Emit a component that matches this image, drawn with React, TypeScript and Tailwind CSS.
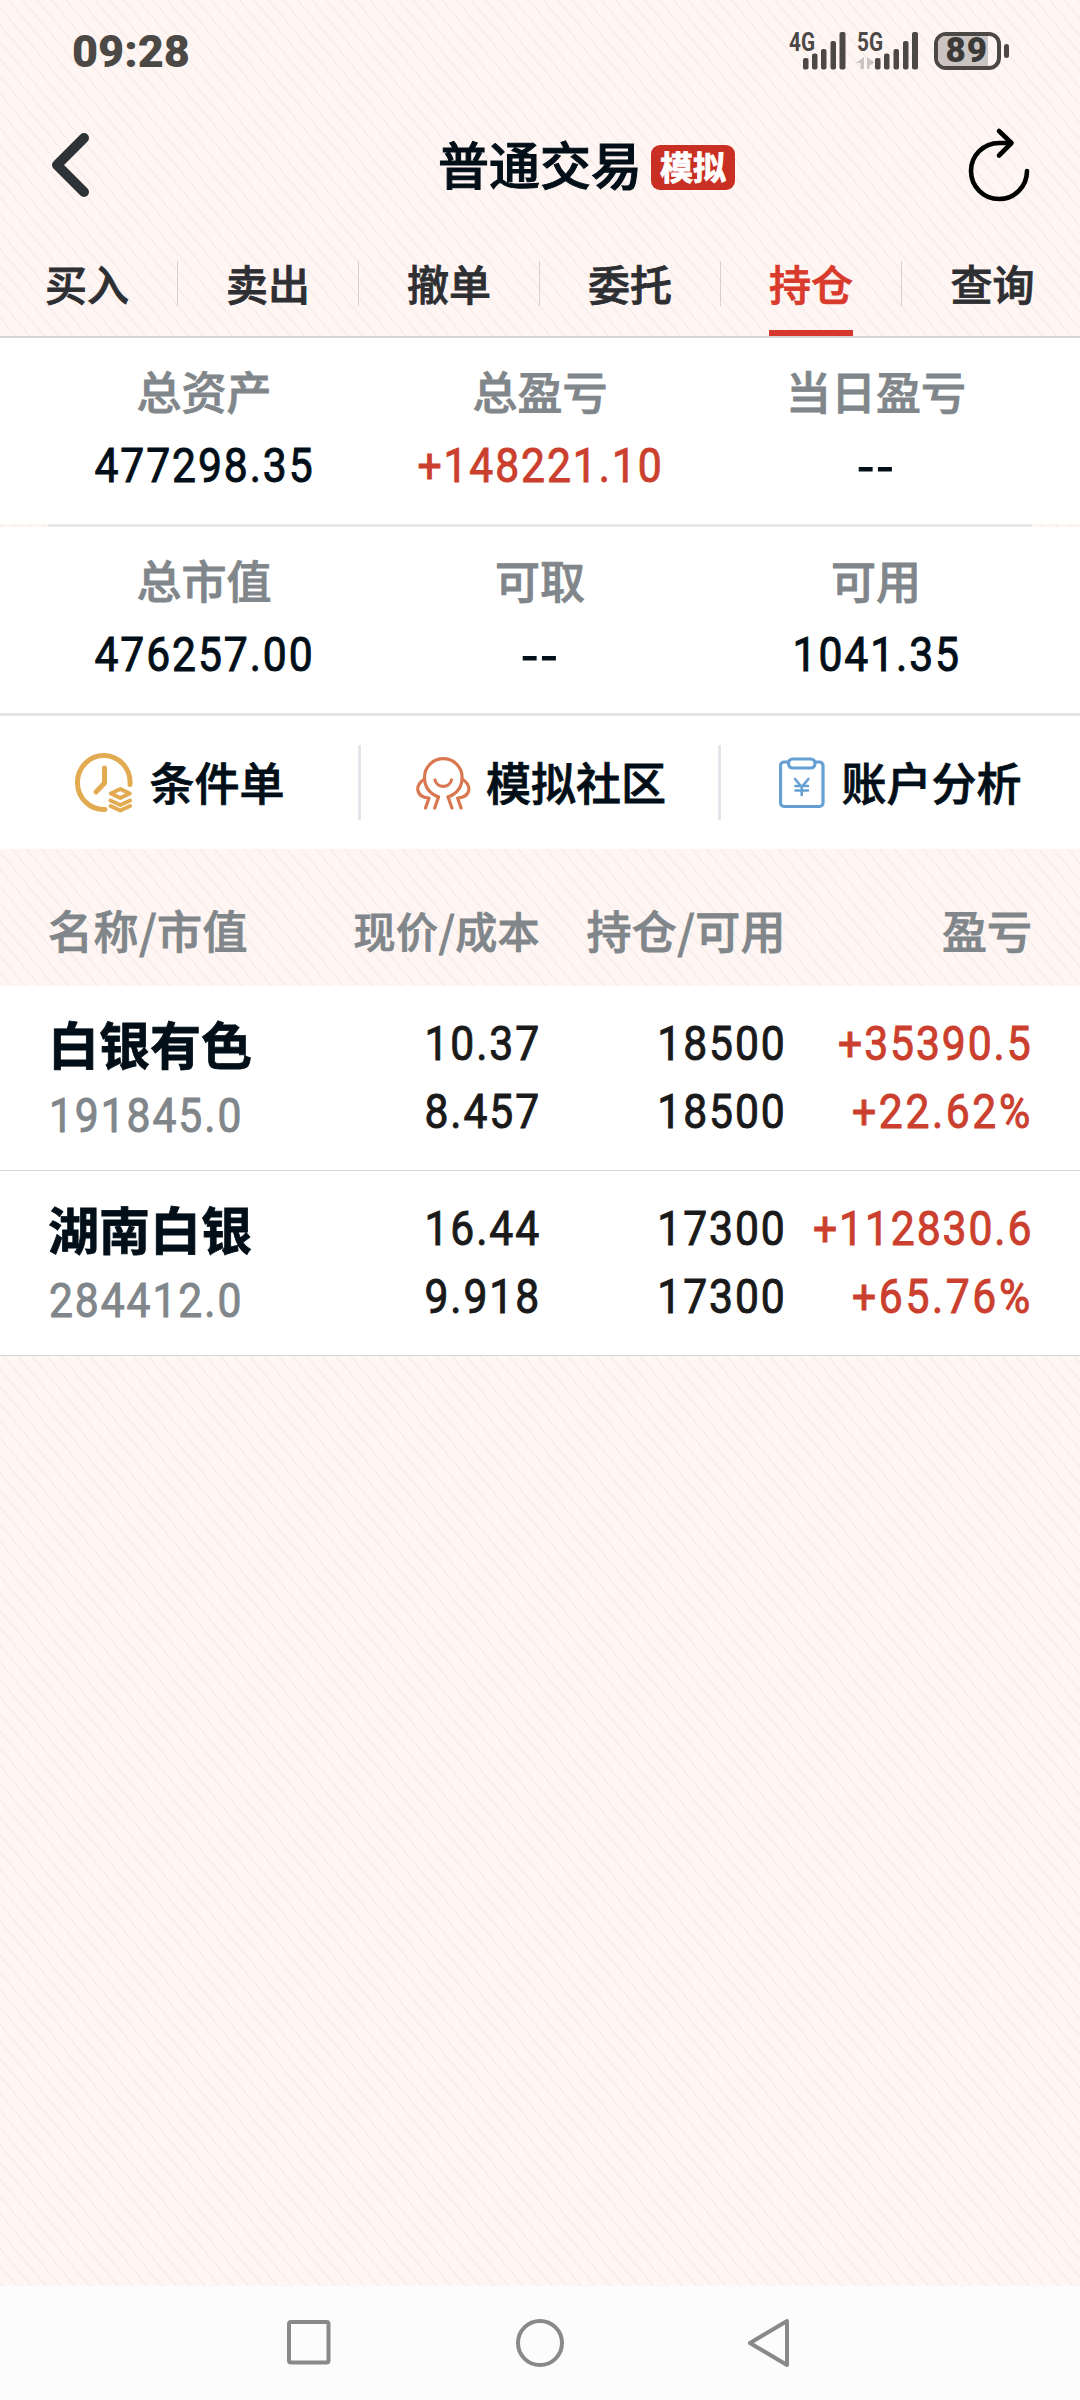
// Simulated trading: holdings screen

import type { ReactNode } from 'react';
import clsx from 'clsx';

interface Summary {
  label: string;
  value: string;
  up?:   boolean;
}

interface Holding {
  name:      string;
  value:     string;
  price:     string;
  cost:      string;
  amount:    string;
  available: string;
  profit:    string;
  rate:      string;
}

const TABS = ['买入', '卖出', '撤单', '委托', '持仓', '查询'];
const ACTIVE_TAB = '持仓';

const SUMMARY: Summary[][] = [
  [
    { label: '总资产',   value: '477298.35' },
    { label: '总盈亏',   value: '+148221.10', up: true },
    { label: '当日盈亏', value: '--' },
  ],
  [
    { label: '总市值', value: '476257.00' },
    { label: '可取',   value: '--' },
    { label: '可用',   value: '1041.35' },
  ],
];

const HOLDINGS: Holding[] = [
  {
    name: '白银有色', value: '191845.0', price: '10.37', cost: '8.457',
    amount: '18500', available: '18500', profit: '+35390.5', rate: '+22.62%',
  },
  {
    name: '湖南白银', value: '284412.0', price: '16.44', cost: '9.918',
    amount: '17300', available: '17300', profit: '+112830.6', rate: '+65.76%',
  },
];

// Narrow DIN-like figures: Roboto squeezed horizontally
function Num({ children, className }: { children: string; className?: string }) {
  return (
    <span className={clsx(
      "inline-block whitespace-nowrap font-['Roboto',sans-serif] text-[49px] font-normal [-webkit-text-stroke:1px_currentColor]",
      children === '--'
        ? '-mr-[4px] translate-y-[2px] scale-x-110 tracking-[4px]'
        : children.endsWith('%')
        ? '-mr-[1px] scale-x-[0.87] tracking-[3px]'
        : '-mr-[1px] scale-x-[0.87] tracking-[2.200px]',
      className,
    )}>
      {children}
    </span>
  );
}

/* ── Icons ── */

function Signal({ label, data }: { label: string; data?: boolean }) {
  return (
    <svg className="overflow-visible" width="62" height="38" viewBox="0 0 62 38" fill="#4b4846">
      <text x="0" y="19" fontFamily="Roboto, sans-serif" fontSize="26" fontWeight="700"
        textLength="26" lengthAdjust="spacingAndGlyphs">{label}</text>
      {data && (
        <g fill="#c9c5c3">
          <path d="M7 25v12H3.500v-6H-1z" />
          <path d="M10 25v12h2.500v-3.500l5-3z" />
        </g>
      )}
      <rect x={data ? 18 : 14} y="26" width="5.500" height="11.500" rx="2" />
      <rect x={data ? 27 : 23} y="21.500" width="5.500" height="16" rx="2" />
      <rect x={data ? 36.5 : 32} y="17" width="5.500" height="20.500" rx="2" />
      <rect x={data ? 46 : 41.5} y="9" width="5.500" height="28.500" rx="2" />
      <rect x={data ? 55 : 50.5} y="0" width="6" height="37.500" rx="2" />
    </svg>
  );
}

function Battery({ level }: { level: number }) {
  return (
    <div className="flex items-center gap-[3px]">
      <div className="flex h-[38px] w-[67px] rounded-[12px] border-[4px] border-[#4b4846]">
        <div className="flex w-[50px] items-center justify-end rounded-l-[8px] bg-[#c9c4c2]">
          <span className="font-['Roboto',sans-serif] text-[35px] leading-[42px] font-black tracking-[1px] text-[#3c3a38]">
            {level}
          </span>
        </div>
      </div>
      <div className="h-[14px] w-[5px] rounded-full bg-[#4b4846]" />
    </div>
  );
}

function BackIcon() {
  return (
    <svg width="40" height="68" viewBox="0 0 40 68" fill="none" stroke="#2d3236"
      strokeWidth="10" strokeLinecap="round" strokeLinejoin="round">
      <path d="M34 7 7 34l27 27" />
    </svg>
  );
}

function RefreshIcon() {
  return (
    <svg width="62" height="76" viewBox="0 0 62 76" fill="none" stroke="#000"
      strokeWidth="4.600" strokeLinecap="round" strokeLinejoin="round">
      <path d="M59 44A28 28 0 1 1 31 16h12" />
      <path d="M31 4 43.500 16 31 28.500" />
    </svg>
  );
}

function ClockIcon() {
  return (
    <svg width="58" height="60" viewBox="75 751 58 60" fill="none" stroke="#e2ab52"
      strokeWidth="5" strokeLinecap="round" strokeLinejoin="round">
      <path d="M130 782.500A26.300 27 0 1 0 105 807.500" />
      <path d="M104.500 766v15l-8.500 9" />
      <g strokeWidth="4">
        <path d="m120.300 787 9.500 4.500-9.500 4.500-9.500-4.500z" />
        <path d="m110.500 798.500 9.800 4.500 9.800-4.500" />
        <path d="m110.500 804 9.800 4.500 9.800-4.500" />
      </g>
    </svg>
  );
}

function CommunityIcon() {
  return (
    <svg width="56" height="54" viewBox="415 756 56 54" fill="none" stroke="#d97850"
      strokeWidth="3.200" strokeLinecap="round" strokeLinejoin="round">
      <path d="M438.500 797c-9-3.500-14-10.500-14-19.500a18.800 18.800 0 0 1 37.600 0c0 9-5 16-14 19.500" />
      <path d="M435 780c2 8.500 14.500 8.500 16.500 0" />
      <path d="M424.500 779c-4 2.500-7.200 6-6.700 11 .6 5 4.500 7.500 11.200 8l-3.500 10" />
      <path d="M462.100 779c4 2.500 7.200 6 6.700 11-.6 5-4.500 7.500-11.200 8l3.500 10" />
      <path d="m438.500 797-3.800 11" />
      <path d="m448.100 797 3.800 11" />
    </svg>
  );
}

function ReportIcon() {
  return (
    <svg width="46" height="52" viewBox="780 757 46 52" fill="none" stroke="#669fd2"
      strokeWidth="3.200" strokeLinecap="round" strokeLinejoin="round">
      <path d="M789.500 762h-4.500a3.500 3.500 0 0 0-3.500 3.500v37.500a3.500 3.500 0 0 0 3.500 3.500h35.500a3.500 3.500 0 0 0 3.500-3.500v-37.500a3.500 3.500 0 0 0-3.500-3.500h-4.500" />
      <rect x="789.500" y="759" width="26.500" height="9" rx="4.200" />
      <path d="m796 779 6.700 8 6.700-8M802.700 787v8M796.500 786h12.500M796.500 790.500h12.500" strokeWidth="2.600" />
    </svg>
  );
}

interface QuickLink {
  label: string;
  icon:  ReactNode;
  gap:   string;
}

const LINKS: QuickLink[] = [
  { label: '条件单',   icon: <ClockIcon />,     gap: 'gap-[16px] pl-[2px]' },
  { label: '模拟社区', icon: <CommunityIcon />, gap: 'gap-[15px] pl-[3px]' },
  { label: '账户分析', icon: <ReportIcon />,    gap: 'gap-[16px] pl-[1px]' },
];

function SummaryRow({ items }: { items: Summary[] }) {
  return (
    <div className="grid grid-cols-3 bg-white px-9">
      {items.map((item) => (
        <div key={item.label} className="flex h-[186px] flex-col items-center pt-[23px]">
          <span className="text-[45px] leading-[60px] font-medium text-[#80868a]">{item.label}</span>
          <Num className={clsx('mt-[15px] leading-[60px]', item.up ? 'text-[#cb3f2e]' : 'text-[#020f18]')}>
            {item.value}
          </Num>
        </div>
      ))}
    </div>
  );
}

function HoldingRow({ item }: { item: Holding }) {
  return (
    <div className="flex h-[185px] border-b border-[#d6d8da] bg-white px-12 pt-[24px] text-[#1a1a1a]">
      <div className="flex w-[240px] shrink-0 flex-col items-start">
        <span className="-mt-[3px] text-[51px] leading-[72px] font-bold text-[#020f18]">{item.name}</span>
        <Num className="mt-[3px] ml-[1px] origin-left leading-[68px] text-[#80868a]">{item.value}</Num>
      </div>
      <div className="flex w-[252px] shrink-0 flex-col items-end">
        <Num className="origin-right leading-[68px]">{item.price}</Num>
        <Num className="origin-right leading-[68px]">{item.cost}</Num>
      </div>
      <div className="flex w-[246px] shrink-0 flex-col items-end">
        <Num className="origin-right leading-[68px]">{item.amount}</Num>
        <Num className="origin-right leading-[68px]">{item.available}</Num>
      </div>
      <div className="flex min-w-0 flex-1 flex-col items-end text-[#cb3f2e]">
        <Num className="origin-right leading-[68px]">{item.profit}</Num>
        <Num className="origin-right leading-[68px]">{item.rate}</Num>
      </div>
    </div>
  );
}

export default function App() {
  return (
    <div className="flex h-[2400px] w-[1080px] flex-col overflow-hidden bg-[#fff6f3] bg-[repeating-linear-gradient(50deg,#fff6f3_0px,#fff6f3_7.800px,#f6edea_8.500px,#f6edea_9.200px,#fff6f3_9.900px,#fff6f3_11.080px)] font-['Noto_Sans_CJK_SC',sans-serif] [-webkit-text-stroke:0.8px_currentColor]">
      {/* Status bar */}
      <div className="flex h-[102px] items-center justify-between pr-[71px] pl-[72px] [-webkit-text-stroke:0px]">
        <span className="font-['Roboto',sans-serif] text-[45px] leading-none font-black text-[#4b4846]">09:28</span>
        <div className="flex items-center">
          <Signal label="4G" />
          <div className="ml-[6px]"><Signal label="5G" data /></div>
          <div className="ml-[15px]"><Battery level={89} /></div>
        </div>
      </div>

      {/* Title */}
      <div className="flex h-[126px] items-center justify-between pr-[50px] pl-[50px]">
        <BackIcon />
        <div className="ml-[115px] flex items-center gap-[9px]">
          <h1 className="-mt-[4px] text-[51px] leading-[64px] font-medium text-[#020f18] [-webkit-text-stroke:1px_currentColor]">普通交易</h1>
          <span className="mt-[4px] flex h-[45px] w-[84px] items-center justify-center rounded-[9px] bg-[#c93023] pb-[2px] text-[33px] leading-none font-bold text-white">
            模拟
          </span>
        </div>
        <RefreshIcon />
      </div>

      {/* Tabs */}
      <div className="-mx-[3px] flex h-[110px] border-b-2 border-[#d5d4d4]">
        {TABS.map((tab, i) => (
          <div key={tab} className="flex w-[181px] items-center">
            <div className="flex h-full flex-1 flex-col items-center justify-between pt-[24px]">
              <span className={clsx(
                'text-[42px] leading-[62px] font-medium',
                tab === ACTIVE_TAB ? 'text-[#d83a2c]' : 'text-[#2e2f33]',
              )}>
                {tab}
              </span>
              {tab === ACTIVE_TAB && <div className="h-[6px] w-[84px] bg-[#d5382c]" />}
            </div>
            {i < TABS.length - 1 && <div className="mt-[3px] h-[45px] w-px bg-[#d3d1d1]" />}
          </div>
        ))}
      </div>

      {/* Account summary */}
      <SummaryRow items={SUMMARY[0]} />
      <div className="mx-12 h-[3px] shrink-0 bg-[#e7e8e9]" />
      <SummaryRow items={SUMMARY[1]} />
      <div className="h-[3px] shrink-0 bg-[#e3e7ea]" />

      {/* Quick links */}
      <div className="flex h-[133px] items-center bg-white">
        {LINKS.map((link, i) => (
          <div key={link.label} className="flex w-[360px] items-center">
            <div className={clsx('flex flex-1 items-center justify-center', link.gap)}>
              {link.icon}
              <span className="-mt-[2px] text-[45px] leading-[60px] font-medium text-[#020f18]">{link.label}</span>
            </div>
            {i < LINKS.length - 1 && <div className="-mr-[1px] h-[75px] w-[3px] bg-[#e3e6ea]" />}
          </div>
        ))}
      </div>

      {/* Holdings */}
      <div className="flex h-[137px] items-center px-12 pt-[24px] text-[45px] leading-[60px] font-medium text-[#80868a]">
        <span className="w-[240px] tracking-[0.500px]">名称/市值</span>
        <span className="w-[252px] text-right text-[42px] tracking-[0.400px]">现价/成本</span>
        <span className="w-[246px] text-right tracking-[0.400px]">持仓/可用</span>
        <span className="flex-1 text-right">盈亏</span>
      </div>
      {HOLDINGS.map((item) => <HoldingRow key={item.name} item={item} />)}

      {/* System navigation */}
      <div className="mt-auto flex h-[114px] items-center justify-center gap-[184px] bg-[#fcfcfc]">
        <svg width="48" height="50" viewBox="0 0 48 50" fill="none" stroke="#898989" strokeWidth="4">
          <rect x="5" y="4" width="39.500" height="40.500" rx="2" />
        </svg>
        <svg width="48" height="50" viewBox="0 0 48 50" fill="none" stroke="#898989" strokeWidth="4">
          <circle cx="24" cy="25" r="22" />
        </svg>
        <svg width="48" height="50" viewBox="0 0 48 50" fill="none" stroke="#898989" strokeWidth="4" strokeLinejoin="round">
          <path d="M39 3v44L2 25z" />
        </svg>
      </div>
    </div>
  );
}
